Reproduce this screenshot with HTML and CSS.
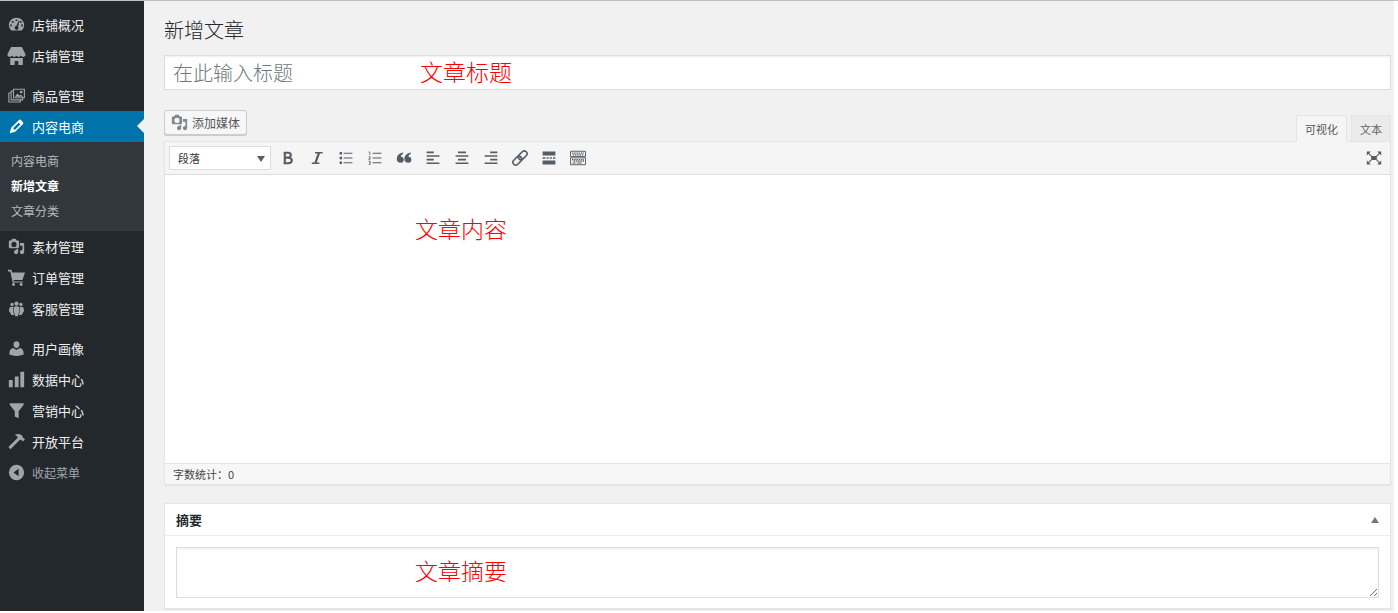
FILE: index.html
```html
<!DOCTYPE html>
<html lang="zh-CN">
<head>
  <meta charset="UTF-8" />
  <meta name="viewport" content="width=device-width, initial-scale=1.0" />
  <title>新增文章</title>
  <link rel="stylesheet" href="styles.css">
</head>
<body>
  <svg width="0" height="0" class="sprite" aria-hidden="true">
    <symbol id="icon-media" viewBox="0 0 20 20">
      <path fill-rule="evenodd" d="M13 11V4c0-.55-.45-1-1-1h-1.670L9 1H5L3.670 3H2c-.55 0-1 .45-1 1v7c0 .55.450 1 1 1h10c.55 0 1-.45 1-1zM7 4.500a3 3 0 1 1 0 6 3 3 0 0 1 0-6zM14 6h5v10.500c0 1.380-1.120 2.500-2.500 2.500S14 17.880 14 16.500s1.120-2.500 2.500-2.500c.17 0 .34.020.5.050V9h-3zM9.500 14q.3 0 .5.050V13h2v3.500c0 1.380-1.120 2.500-2.500 2.500S7 17.880 7 16.500 8.120 14 9.500 14z"/>
    </symbol>
  </svg>

  <div class="wrapper">
    <nav class="sidebar">
      <ul class="menu">
        <li><a href="#">
          <svg class="icon" viewBox="0 0 20 20"><path fill-rule="evenodd" d="M3.760 17h12.480A8.800 8.800 0 0 0 19 10.500C19 5.800 15 2 10 2s-9 3.800-9 8.500A8.800 8.800 0 0 0 3.760 17zM9 4h2v2H9zM4.500 6h2v2h-2zM14 6h2v2h-2zM2.500 10h2v2h-2zM15.500 10h2v2h-2zM12.600 5.500l.9.500-1.700 6.500a2.200 2.200 0 1 1-2-.7z"/></svg>
          店铺概况</a></li>
        <li><a href="#">
          <svg class="icon icon-store" viewBox="0 0 20 20"><path d="M4 0h12l4 8v1.500q-1 1.500-2.500 1.500T15 9.800q-1 1.200-2.500 1.200T10 9.800Q9 11 7.500 11T5 9.800Q4 11 2.500 11T0 9.500V8zM3 12.200h14V20h-5v-4.500H8V20H3z"/></svg>
          店铺管理</a></li>
        <li class="separator"></li>
        <li><a href="#">
          <svg class="icon" viewBox="0 0 20 20"><path fill="none" stroke="currentColor" stroke-width="1.300" d="M6.500 2.700h12.800v10H6.500zM6.500 4.800H3.700v10.400h13.500v-2.500M3.700 7H1v10.700h13.500v-2.500"/><path d="M8 11.500l3-4 2.500 2.500 1.500-1 3 2.500z"/><circle cx="15.500" cy="6" r="1.700"/></svg>
          商品管理</a></li>
        <li class="current"><a href="#">
          <svg class="icon" viewBox="0 0 20 20"><path fill-rule="evenodd" d="M12.900 2.300q1.300-1 2.800.5l1.500 1.500q1.500 1.500.5 2.800L8.500 16.300 2 18l1.700-6.500zM12.500 5.500L6 12l2 2 6.500-6.500z"/></svg>
          内容电商</a>
          <ul class="submenu">
            <li><a href="#">内容电商</a></li>
            <li class="active"><a href="#">新增文章</a></li>
            <li><a href="#">文章分类</a></li>
          </ul>
        </li>
        <li><a href="#"><svg class="icon"><use href="#icon-media"/></svg>素材管理</a></li>
        <li><a href="#">
          <svg class="icon" viewBox="0 0 20 20"><path d="M0 1h4l1 3h15l-3 9H6.500l.5 1.700h10.500V16H5.500L2.700 3H0z"/><circle cx="6.500" cy="18.300" r="1.700"/><circle cx="15.500" cy="18.300" r="1.700"/></svg>
          订单管理</a></li>
        <li><a href="#">
          <svg class="icon" viewBox="0 0 20 20"><circle cx="10" cy="4.200" r="2.500"/><circle cx="4.800" cy="5.200" r="2"/><circle cx="15.200" cy="5.200" r="2"/><path d="M7 8q3-1.500 6 0v6l-1.500 5h-3L7 14zM2 8.500q2-1 4.300-.3V14l1 3.500H4L1 12.500zM18 8.500q-2-1-4.300-.3V14l-1 3.500H16l3-5z"/></svg>
          客服管理</a></li>
        <li class="separator"></li>
        <li><a href="#">
          <svg class="icon" viewBox="0 0 20 20"><path d="M10 9.500c2 0 3.500-2 3.500-4.300S12.300 1.500 10 1.500 6.500 2.900 6.500 5.200 8 9.500 10 9.500zM6.500 9.500Q8 11.500 10 11.500t3.500-2q5 .5 5 7.500-4 1.700-8.500 1.700T1.500 17q0-7 5-7.500z"/></svg>
          用户画像</a></li>
        <li><a href="#">
          <svg class="icon" viewBox="0 0 20 20"><path d="M14.500 1H19v18h-4.500zM8 6.500h4.500V19H8zM1 10.500h4.500V19H1z"/></svg>
          数据中心</a></li>
        <li><a href="#">
          <svg class="icon" viewBox="0 0 20 20"><path d="M2 1.500h16.500v1.700L12.500 11v8L8 17v-6L2 3.200z"/></svg>
          营销中心</a></li>
        <li><a href="#">
          <svg class="icon" viewBox="0 0 20 20"><path d="M8 2q6-2 9 1.500l.5 2L20 7l-2.500 3-2.200-2.200-1.300.2L3 19l-2.500-2.500 11-11Q11 3 8 2z"/></svg>
          开放平台</a></li>
      </ul>
      <button type="button" class="collapse">
        <svg class="icon" viewBox="0 0 20 20"><path fill-rule="evenodd" d="M10 1a9 9 0 1 1 0 18 9 9 0 0 1 0-18zM12.500 5.500l-6 4.500 6 4.500z"/></svg>
        收起菜单
      </button>
    </nav>

    <main class="content">
      <h1>新增文章</h1>

      <div class="field">
        <input type="text" class="title-input" aria-label="标题" placeholder="在此输入标题" />
        <span class="note note-title">文章标题</span>
      </div>

      <div class="editor-tools">
        <button type="button" class="add-media"><svg class="icon"><use href="#icon-media"/></svg>添加媒体</button>
        <div class="tabs">
          <button type="button" class="tab tab-active">可视化</button>
          <button type="button" class="tab">文本</button>
        </div>
      </div>

      <div class="editor">
        <div class="toolbar">
          <div class="format">
            <select aria-label="格式">
              <option>段落</option>
              <option>标题 1</option>
              <option>标题 2</option>
            </select>
          </div>
          <button type="button" title="粗体"><svg class="icon" viewBox="0 0 20 20"><path fill="none" stroke="currentColor" stroke-width="2.600" d="M6 3.500v13M4.500 3.500H10q3.500 0 3.500 3t-3.500 3H7M10 9.700q4.800 0 4.800 3.300T10 16.500H4.500"/></svg></button>
          <button type="button" title="斜体"><svg class="icon" viewBox="0 0 20 20"><path fill="none" stroke="currentColor" stroke-width="2" d="M7.500 3.500H17M3.500 16.500H13"/><path fill="none" stroke="currentColor" stroke-width="2.800" d="M12.500 3.500l-4.600 13"/></svg></button>
          <button type="button" title="项目符号列表"><svg class="icon" viewBox="0 0 20 20"><path d="M2 2.500h3v3H2zM2 8.500h3v3H2zM2 14.500h3v3H2zM7 3.500h11v1.300H7zM7 9.400h11v1.300H7zM7 15.400h11v1.300H7z"/></svg></button>
          <button type="button" title="编号列表"><svg class="icon" viewBox="0 0 20 20"><path d="M7 3.500h11v1.300H7zM7 9.400h11v1.300H7zM7 15.400h11v1.300H7z"/><path fill="none" stroke="currentColor" d="M2 2.500h1.500v4M2 8.500h2v1.500L2 11.500h2.500M2 14h2v4H2M2.500 16H4"/></svg></button>
          <button type="button" title="引用"><svg class="icon" viewBox="0 0 20 20"><path d="M9 3v1.700Q6 6 6 8.500q3.700.2 3.700 3.800 0 3.700-3.900 3.700Q1 16 1 11 1 4.500 9 3zM18.500 3v1.700q-3 1.300-3 3.800 3.700.2 3.700 3.800 0 3.700-3.900 3.700-4.800 0-4.800-5 0-6.500 8-8z"/></svg></button>
          <button type="button" title="左对齐"><svg class="icon" viewBox="0 0 20 20"><path d="M2 2h9v2H2zM2 6.500h16v2H2zM2 11h9v2H2zM2 15.500h16v2H2z"/></svg></button>
          <button type="button" title="居中对齐"><svg class="icon" viewBox="0 0 20 20"><path d="M5 2h10v2H5zM2 6.500h16v2H2zM5 11h10v2H5zM2 15.500h16v2H2z"/></svg></button>
          <button type="button" title="右对齐"><svg class="icon" viewBox="0 0 20 20"><path d="M9 2h9v2H9zM2 6.500h16v2H2zM9 11h9v2H9zM2 15.500h16v2H2z"/></svg></button>
          <button type="button" title="插入链接"><svg class="icon" viewBox="0 0 20 20"><g fill="none" stroke="currentColor" stroke-width="2" transform="rotate(-45 10 10)"><rect x="-1" y="6.500" width="12.500" height="7" rx="3.500"/><rect x="8.500" y="6.500" width="12.500" height="7" rx="3.500"/></g></svg></button>
          <button type="button" title="插入More标签"><svg class="icon" viewBox="0 0 20 20"><path d="M2 2h16v5H2zM2 13h16v5H2zM2 9h3.500v2H2zM7 9h2.500v2H7zM11 9h2.500v2H11zM15 9h3v2h-3z"/></svg></button>
          <button type="button" title="工具栏开关"><svg class="icon" viewBox="0 0 20 20"><path fill="none" stroke="currentColor" stroke-width="1.200" d="M.6 1.600h18.800v6.600H.6zM.6 9.800h18.800v8.600H.6z"/><path fill="none" stroke="currentColor" stroke-width="1.600" stroke-dasharray="1.800 1" d="M2.500 3.800h15M3.500 6.200h13M2.500 12h15M4.500 14h13"/><path d="M3 15.500h4v1.300H3zM8.500 15.500h6v1.300h-6z"/></svg></button>
          <button type="button" class="fullscreen" title="全屏写作模式"><svg class="icon" viewBox="0 0 20 20"><path d="M6.500 7.500h7v5h-7zM1 2h5L1 7zM19 2v5l-5-5zM1 18v-5l5 5zM19 18h-5l5-5z"/><path fill="none" stroke="currentColor" stroke-width="1.400" d="M2 3l5 5M18 3l-5 5M2 17l5-5M18 17l-5-5"/></svg></button>
        </div>
        <div class="field">
          <div class="editor-body" contenteditable="true" role="textbox" aria-label="文章内容"></div>
          <span class="note note-body">文章内容</span>
        </div>
        <div class="statusbar">字数统计：0</div>
      </div>

      <section class="postbox">
        <header class="postbox-header">
          <h2>摘要</h2>
          <button type="button" class="toggle" aria-label="切换面板：摘要"></button>
        </header>
        <div class="field postbox-inside">
          <textarea class="excerpt" aria-label="摘要"></textarea>
          <span class="note note-excerpt">文章摘要</span>
        </div>
      </section>
    </main>
  </div>
</body>
</html>
```
FILE: styles.css
```css
* {
  box-sizing: border-box;
}

body {
  margin: 0;
  background-color: #fff;
  color: #444;
  font-family: "Noto Sans CJK SC", "Open Sans", sans-serif;
  font-size: 12px;
  border-top: 1px solid #c0c0c0;
}

button,
input,
select,
textarea {
  font-family: inherit;
}

button {
  cursor: pointer;
}

h1,
h2,
ul {
  margin: 0;
  padding: 0;
}

.sprite {
  position: absolute;
}

.icon {
  width: 16px;
  height: 16px;
  flex: none;
  fill: currentColor;
}

.wrapper {
  display: flex;
  min-height: calc(100vh - 3px);
  margin-right: 4px;
  background-color: #f1f1f1;
}

/* sidebar */
.sidebar {
  width: 144px;
  flex: none;
  padding-top: 8px;
  background-color: #23282d;
}

.menu,
.submenu {
  list-style: none;
}

.menu > li > a,
.collapse {
  display: flex;
  align-items: center;
  gap: 7px;
  height: 31px;
  padding: 0 8px;
  color: #eee;
  font-size: 13px;
  text-decoration: none;
}

.menu .icon,
.collapse .icon {
  width: 17px;
  height: 17px;
  color: #a0a5aa;
}

.menu .icon-store {
  width: 19px;
  height: 18px;
  margin: 0 -1px;
}

.separator {
  height: 9px;
}

.menu > .current > a {
  position: relative;
  background-color: #0073aa;
  color: #fff;
}

.menu > .current > a::after {
  content: "";
  position: absolute;
  right: 0;
  top: 8px;
  border: 7px solid transparent;
  border-left: none;
  border-right-color: #f1f1f1;
}

.menu .current .icon {
  color: #fff;
}

.submenu {
  height: 89px;
  padding-top: 6px;
  background-color: #32373c;
}

.submenu a {
  display: block;
  padding-left: 11px;
  color: #b4b9be;
  font-size: 12px;
  line-height: 25px;
  text-decoration: none;
}

.submenu .active a {
  color: #fff;
  font-weight: bold;
}

.collapse {
  width: 100%;
  border: none;
  background: none;
  color: #a0a5aa;
  font-size: 12px;
}

/* content */
.content {
  flex: 1;
  min-width: 0;
  padding: 14px 3px 0 20px;
}

h1 {
  margin-bottom: 10px;
  color: #23282d;
  font-size: 20px;
  font-weight: 300;
  line-height: 30px;
}

.field {
  position: relative;
}

.title-input {
  display: block;
  width: 100%;
  height: 35px;
  padding: 0 8px;
  border: 1px solid #ddd;
  background-color: #fff;
  box-shadow: inset 0 1px 2px rgba(0, 0, 0, 0.07);
  font-size: 20px;
  font-weight: 300;
}

.title-input::placeholder {
  color: #72777c;
}

/* red labels lying over the fields */
.note {
  position: absolute;
  color: #f00;
  font-size: 23px;
  font-weight: 300;
  line-height: 30px;
  pointer-events: none;
}

.note-title {
  left: 256px;
  top: 1px;
}

.note-body {
  left: 250px;
  top: 38px;
}

.note-excerpt {
  left: 250px;
  top: 19px;
}

.editor-tools {
  display: flex;
  justify-content: space-between;
  align-items: flex-start;
  margin-top: 20px;
  height: 31px;
}

.add-media {
  display: flex;
  align-items: center;
  gap: 4px;
  height: 25px;
  padding: 0 6px;
  border: 1px solid #ccc;
  border-radius: 3px;
  background-color: #f7f7f7;
  box-shadow: 0 1px 0 #ccc;
  color: #555;
  font-size: 12px;
}

.add-media .icon {
  width: 17px;
  height: 17px;
  color: #82878c;
}

.tabs {
  display: flex;
  gap: 4px;
  align-self: flex-end;
}

.tab {
  height: 26px;
  padding: 0 8px;
  border: 1px solid #e5e5e5;
  border-bottom: none;
  background-color: #ebebeb;
  color: #666;
  font-size: 11px;
}

.tab-active {
  position: relative;
  height: 27px;
  margin-bottom: -1px;
  background-color: #f5f5f5;
  color: #555;
}

.editor {
  border: 1px solid #e5e5e5;
  background-color: #fff;
  box-shadow: 0 1px 1px rgba(0, 0, 0, 0.04);
}

.toolbar {
  display: flex;
  align-items: center;
  gap: 5px;
  height: 33px;
  padding: 0 4px;
  border-bottom: 1px solid #ddd;
  background-color: #f5f5f5;
}

.toolbar button {
  display: flex;
  align-items: center;
  justify-content: center;
  width: 24px;
  height: 24px;
  padding: 0;
  border: none;
  background: none;
  color: #555d66;
}

.format {
  position: relative;
}

.format select {
  display: block;
  appearance: none;
  width: 102px;
  height: 24px;
  padding: 0 8px;
  border: 1px solid #ddd;
  border-radius: 0;
  background-color: #fff;
  color: #32373c;
  font-size: 11px;
}

.format::after {
  content: "";
  position: absolute;
  right: 6px;
  top: 10px;
  border: 4px solid transparent;
  border-top: 6px solid #555d66;
  border-bottom: none;
  pointer-events: none;
}

.toolbar .fullscreen {
  margin-left: auto;
}

.editor-body {
  min-height: 288px;
  outline: none;
}

.statusbar {
  height: 21px;
  padding: 0 8px;
  border-top: 1px solid #e5e5e5;
  background-color: #f7f7f7;
  font-size: 11px;
  line-height: 20px;
}

.postbox {
  margin-top: 18px;
  border: 1px solid #e5e5e5;
  background-color: #fff;
  box-shadow: 0 1px 1px rgba(0, 0, 0, 0.04);
}

.postbox-header {
  display: flex;
  align-items: center;
  justify-content: space-between;
  height: 32px;
  padding: 0 11px;
  border-bottom: 1px solid #eee;
}

h2 {
  color: #23282d;
  font-size: 13px;
}

.toggle {
  width: 8px;
  height: 6px;
  padding: 0;
  border: 4px solid transparent;
  border-top: none;
  border-bottom: 6px solid #72777c;
  background: none;
}

.postbox-inside {
  padding: 11px 11px 10px;
}

.excerpt {
  display: block;
  width: 100%;
  height: 51px;
  border: 1px solid #ddd;
  background-color: #fff;
  box-shadow: inset 0 1px 2px rgba(0, 0, 0, 0.07);
  resize: vertical;
}
```
